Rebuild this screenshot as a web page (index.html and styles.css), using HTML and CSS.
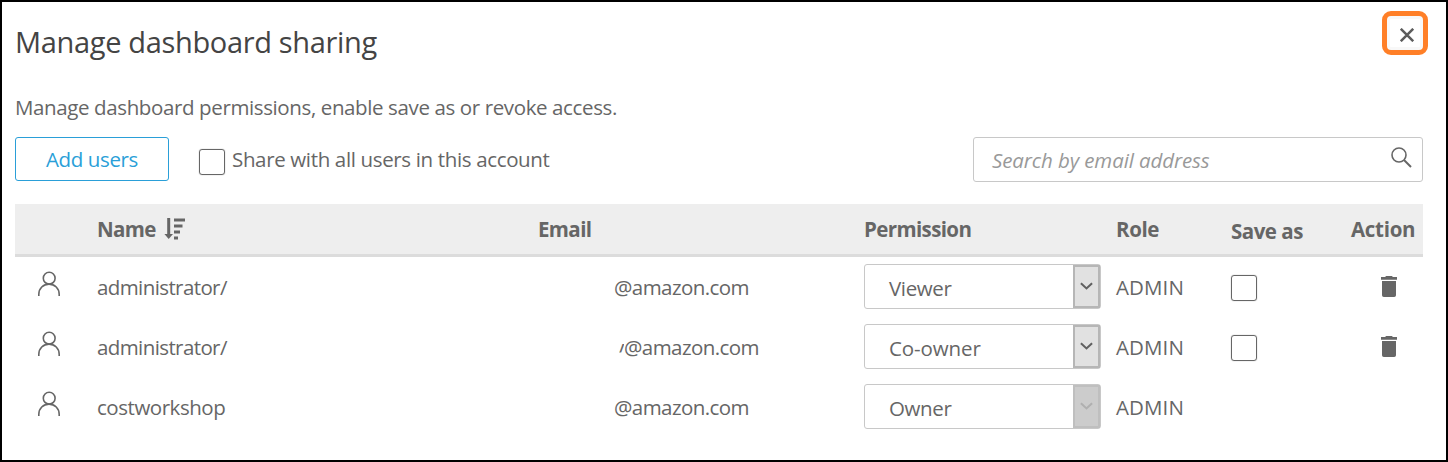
FILE: index.html
```html
<!DOCTYPE html>
<html lang="en">
<head>
<meta charset="utf-8">
<title>Manage dashboard sharing</title>
<link rel="stylesheet" href="styles.css">
</head>
<body>
<svg class="defs" aria-hidden="true">
  <symbol id="user" viewBox="0 0 24 26"><g fill="none" stroke="#666" stroke-width="1.6"><circle cx="12.2" cy="7.2" r="5.9"/><path d="M1.8 25v-1.6C1.8 17.4 6.300 13.100 12 13.100s10.200 4.300 10.200 10.300V25"/></g></symbol>
  <symbol id="trash" viewBox="0 0 16 21"><path fill="#666" d="M0 1.100h4.200L5 0h6l.8 1.100H16v2.600H0zM1 5h14v14.200a1.800 1.800 0 0 1-1.800 1.800H2.800A1.800 1.800 0 0 1 1 19.200z"/></symbol>
  <symbol id="chevron" viewBox="0 0 14 8"><path fill="none" stroke="currentColor" stroke-width="2.200" d="M1 1l6 5.600L13 1"/></symbol>
</svg>
<main class="dialog">
  <header class="top">
    <h1 class="title">Manage dashboard sharing</h1>
    <button class="close" aria-label="Close"><svg width="14" height="14" viewBox="0 0 14 14"><path d="M.8.8l12.400 12.400M13.200.8L.8 13.200" stroke="#5c5c5c" stroke-width="2.500"/></svg></button>
  </header>
  <p class="intro">Manage dashboard permissions, enable save as or revoke access.</p>
  <div class="toolbar">
    <button class="add">Add users</button>
    <label class="share"><span class="box"></span><span class="share-text">Share with all users in this account</span></label>
    <div class="search"><span class="hint">Search by email address</span>
      <svg class="lens" width="21" height="21" viewBox="0 0 21 21"><g fill="none" stroke="#666" stroke-width="1.600"><circle cx="8" cy="8" r="7"/><path d="M13 13l7 7" stroke-width="2"/></g></svg>
    </div>
  </div>
  <section class="table">
    <div class="row head">
      <span></span>
      <span class="sort"><span>Name</span><svg width="22" height="22" viewBox="0 0 22 22"><path fill="#666" d="M3.200 0h3v16H9l-4.300 5L.4 16h2.800zM10 .5h11v3H10zM10 6.500h8.500v3H10zM10 12.500h6v3h-6zM10 18.500h4v3h-4z"/></svg></span>
      <span>Email</span><span>Permission</span><span class="h-role">Role</span><span class="h-save">Save as</span><span class="h-action">Action</span>
    </div>
    <div class="row">
      <svg class="user"><use href="#user"/></svg>
      <span class="name">administrator/</span>
      <span class="email">@amazon.com</span>
      <div class="select"><span>Viewer</span><i class="arrow"><svg><use href="#chevron"/></svg></i></div>
      <span class="role">ADMIN</span><span class="box"></span><svg class="trash"><use href="#trash"/></svg>
    </div>
    <div class="row">
      <svg class="user"><use href="#user"/></svg>
      <span class="name">administrator/</span>
      <span class="email"><span class="tail">y</span>@amazon.com</span>
      <div class="select"><span class="coowner">Co-owner</span><i class="arrow"><svg><use href="#chevron"/></svg></i></div>
      <span class="role">ADMIN</span><span class="box"></span><svg class="trash"><use href="#trash"/></svg>
    </div>
    <div class="row">
      <svg class="user"><use href="#user"/></svg>
      <span class="name cost">costworkshop</span>
      <span class="email">@amazon.com</span>
      <div class="select"><span>Owner</span><i class="arrow off"><svg><use href="#chevron"/></svg></i></div>
      <span class="role">ADMIN</span>
    </div>
  </section>
</main>
</body>
</html>
```
FILE: styles.css
```css
* { box-sizing: border-box; }
body { margin: 0; }
.defs { display: none; }
.dialog {
  width: 1448px; height: 462px; border: 2px solid #000; background: #fff;
  padding: 9px 23px 0 13px; overflow: hidden; white-space: nowrap;
  font: 20.5px/28px "Open Sans", "Noto Sans", sans-serif; color: #666; letter-spacing: -.38px;
}
button { font: inherit; letter-spacing: inherit; padding: 0; background: #fff; }
.top { display: flex; justify-content: space-between; margin-right: -5px; height: 44px; }
.title { margin: 11px 0 0; font-size: 29px; line-height: 40px; font-weight: 400; color: #444; letter-spacing: -.34px; }
.close {
  width: 46px; height: 44px; border: 5px solid #ff7f27; border-radius: 9px;
  display: flex; align-items: center; justify-content: center; padding: 3px 0 0 3px;
  background: #fff; box-shadow: inset 0 0 0 3px #f8f8f8;
}
.intro { margin: 38px 0 0; }
.toolbar { display: flex; align-items: flex-start; margin-top: 16px; height: 45px; }
.add { width: 154px; height: 44px; border: 1px solid #2a9fd8; border-radius: 3px; color: #2a9fd8; padding-bottom: 1px; }
.box { display: block; width: 26px; height: 26px; border: 1px solid #666; border-radius: 3px; box-shadow: 0 0 1px #888; }
.share { display: flex; margin-left: 30px; }
.share .box { margin-top: 12px; }
.share-text { margin: 8px 0 0 7px; letter-spacing: -.35px; }
.search { display: flex; justify-content: space-between; width: 450px; height: 45px; margin-left: auto; border: 1px solid #c8c8c8; border-radius: 3px; padding: 8px 10px 0 18px; }
.hint { font-style: italic; color: #999; letter-spacing: -.1px; }
.lens { margin-top: 1px; }
.table { margin-top: 22px; }
.row { display: grid; grid-template-columns: 82px 441px 326px 252px 115px 120px 72px; height: 60px; padding-top: 1px; align-items: center; }
.head { height: 53px; padding-top: 0; padding-bottom: 1px; background: #eee; border-bottom: 3px solid #dcdcdc; font-weight: 700; letter-spacing: -.62px; }
.sort { display: flex; align-items: center; gap: 8px; }
.h-role { letter-spacing: -.4px; }
.h-save { padding-top: 4px; letter-spacing: -.5px; }
.h-action { letter-spacing: -.3px; }
.user { width: 24px; height: 26px; margin: -8px 0 0 22px; }
.name { margin-top: -2px; letter-spacing: -.6px; }
.cost { letter-spacing: -.46px; }
.email { display: flex; margin-top: -2px; padding-left: 76px; letter-spacing: -.56px; }
.tail { width: 10px; height: 28px; clip-path: inset(0 0 8px 5px); }
.role { margin-top: -2px; letter-spacing: .1px; }
.coowner { letter-spacing: -.1px; }
.select { display: flex; justify-content: space-between; width: 237px; height: 45px; margin-top: -2px; border: 1px solid #c8c8c8; border-radius: 3px; padding-left: 24px; line-height: 47px; }
.arrow { width: 27px; height: 43px; border: 2px solid #b6b6b6; background: #e1e1e1; color: #606060; display: flex; align-items: center; justify-content: center; padding-bottom: 1px; }
.arrow svg { width: 13px; height: 8px; }
.arrow.off { background: #ccc; border-color: #bfbfbf; color: #b0b0b0; }
.trash { width: 16px; height: 21px; margin: -3px 0 0 30px; }
```
